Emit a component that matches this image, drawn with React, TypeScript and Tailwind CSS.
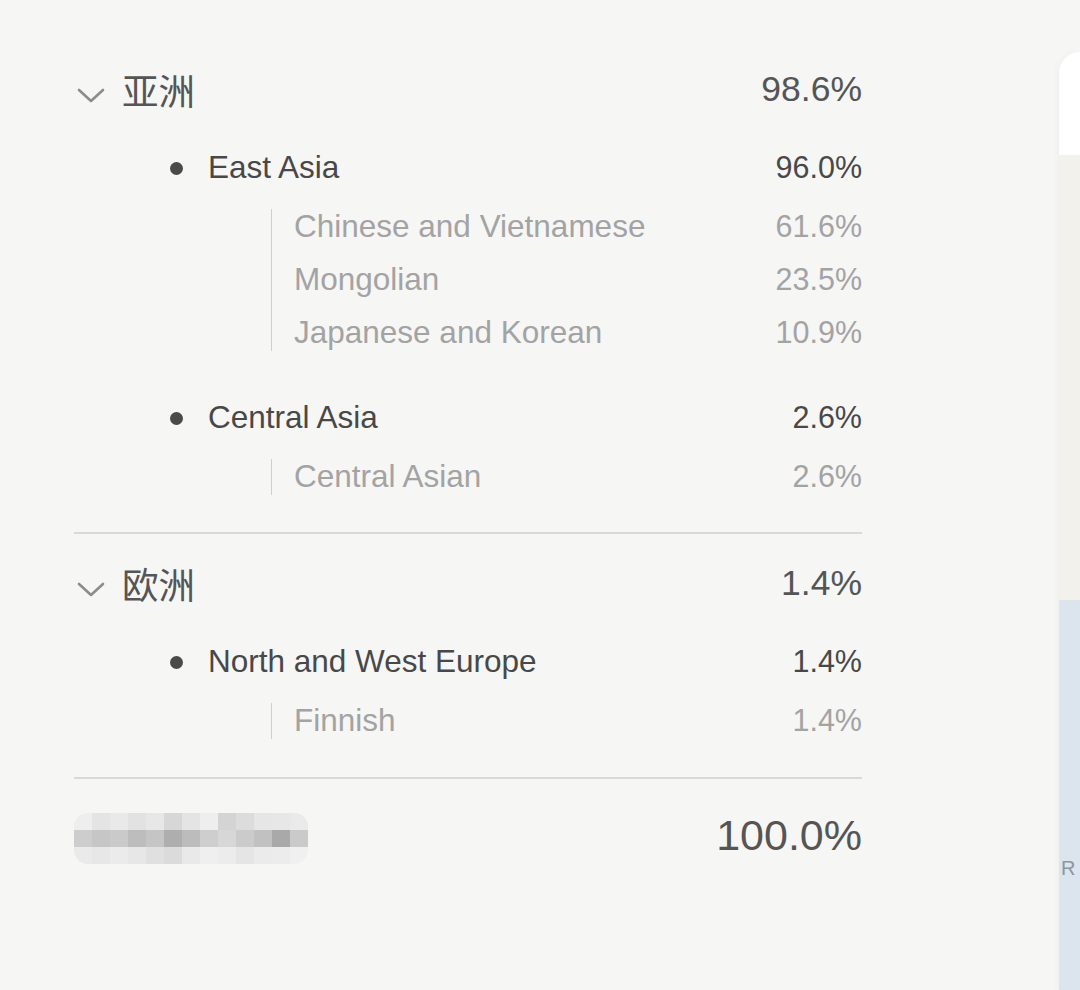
import React from 'react';

type Leaf = { name: string; pct: string };
type Group = { name: string; pct: string; items: Leaf[] };
type Region = { name: string; pct: string; groups: Group[] };

const REGIONS: Region[] = [
  {
    name: '亚洲',
    pct: '98.6%',
    groups: [
      {
        name: 'East Asia',
        pct: '96.0%',
        items: [
          { name: 'Chinese and Vietnamese', pct: '61.6%' },
          { name: 'Mongolian', pct: '23.5%' },
          { name: 'Japanese and Korean', pct: '10.9%' },
        ],
      },
      {
        name: 'Central Asia',
        pct: '2.6%',
        items: [{ name: 'Central Asian', pct: '2.6%' }],
      },
    ],
  },
  {
    name: '欧洲',
    pct: '1.4%',
    groups: [
      {
        name: 'North and West Europe',
        pct: '1.4%',
        items: [{ name: 'Finnish', pct: '1.4%' }],
      },
    ],
  },
];

// pixelated name in the total row
const MOSAIC = [
  ['#eeeeee', '#e4e4e4', '#e9e9e9', '#e2e2e2', '#e7e7e7', '#d7d7d7', '#e4e4e4', '#eeeeee', '#d4d4d4', '#dcdcdc', '#e6e6e6', '#e7e7e7', '#eaeaea'],
  ['#cdcdcd', '#c6c6c6', '#cacaca', '#bdbdbd', '#c5c5c5', '#aeaeae', '#bcbcbc', '#cecece', '#d7d7d7', '#cbcbcb', '#c1c1c1', '#a9a9a9', '#cacaca'],
  ['#eaeaea', '#e7e7e7', '#ebebeb', '#e7e7e7', '#e0e0e0', '#dbdbdb', '#e9e9e9', '#efefef', '#ececec', '#e5e5e5', '#ebebeb', '#ececec', '#f0f0f0'],
];

function Chevron() {
  return (
    <svg width="30" height="18" viewBox="0 0 30 18" className="mt-[10px]">
      <polyline points="3,4 15,15 27,4" fill="none" stroke="#8c8c8c" strokeWidth="2.6" strokeLinecap="round" strokeLinejoin="round" />
    </svg>
  );
}

function GroupBlock({ group }: { group: Group }) {
  return (
    <div className="flex flex-col">
      <div className="flex h-[40px] items-center justify-between text-[#484848]">
        <div className="flex items-center">
          <span className="ml-[96px] h-[13px] w-[13px] rounded-full bg-[#4a4a4a]" />
          <span className="ml-[25px] text-[31.5px]">{group.name}</span>
        </div>
        <span className="text-[30.5px]">{group.pct}</span>
      </div>
      <div className="mt-[21px] flex">
        <div className="w-[197px] shrink-0" />
        <div className="flex flex-1 flex-col gap-[17px] border-l-[1.5px] border-[#cfcfcf] pl-[22px]">
          {group.items.map((it) => (
            <div key={it.name} className="flex h-[36px] items-center justify-between text-[#a3a3a3]">
              <span className="text-[31.5px]">{it.name}</span>
              <span className="text-[30.5px]">{it.pct}</span>
            </div>
          ))}
        </div>
      </div>
    </div>
  );
}

function RegionBlock({ region }: { region: Region }) {
  return (
    <div className="flex flex-col">
      <div className="flex h-[50px] items-center justify-between text-[35.5px] text-[#555]">
        <div className="flex items-center">
          <span className="ml-[2px] w-[46px]">
            <Chevron />
          </span>
          <span className="font-['Noto_Sans_CJK_SC',sans-serif] text-[36.5px] font-normal text-[#555]">{region.name}</span>
        </div>
        <span>{region.pct}</span>
      </div>
      <div className="mt-[33px] flex flex-col gap-[47px]">
        {region.groups.map((g) => (
          <GroupBlock key={g.name} group={g} />
        ))}
      </div>
    </div>
  );
}

export default function App() {
  return (
    <div className="flex h-[990px] w-full overflow-hidden bg-[#f6f6f5] font-['Liberation_Sans','Noto_Sans_CJK_SC',sans-serif]">
      {/* Breakdown list */}
      <div className="ml-[74px] mt-[65px] flex w-[788px] flex-col">
        <RegionBlock region={REGIONS[0]} />
        <div className="mt-[37px] h-[2px] bg-[#d9d9d9]" />
        <div className="mt-[25px]">
          <RegionBlock region={REGIONS[1]} />
        </div>
        <div className="mt-[38px] h-[2px] bg-[#d9d9d9]" />
        <div className="mt-[26px] flex h-[60px] items-center justify-between">
          <div className="mt-[6px] flex flex-col overflow-hidden rounded-[14px] blur-[0.6px]">
            {MOSAIC.map((row, i) => (
              <div key={i} className="flex">
                {row.map((c, j) => (
                  <div key={j} className="h-[17px] w-[18px]" style={{ backgroundColor: c }} />
                ))}
              </div>
            ))}
          </div>
          <span className="text-[43px] text-[#555]">100.0%</span>
        </div>
      </div>

      {/* Edge of the neighbouring card */}
      <div className="ml-auto mt-[52px] flex w-[21px] flex-col overflow-hidden rounded-tl-[22px] shadow-[-2px_0_6px_rgba(0,0,0,0.03)]">
        <div className="h-[103px] bg-white" />
        <div className="h-[445px] bg-[#f2f1eb]" />
        <div className="flex-1 bg-[#dce5ed] pt-[258px]">
          <span className="ml-[2px] block text-[20px] leading-none text-[#8e969f]">R</span>
        </div>
      </div>
    </div>
  );
}
